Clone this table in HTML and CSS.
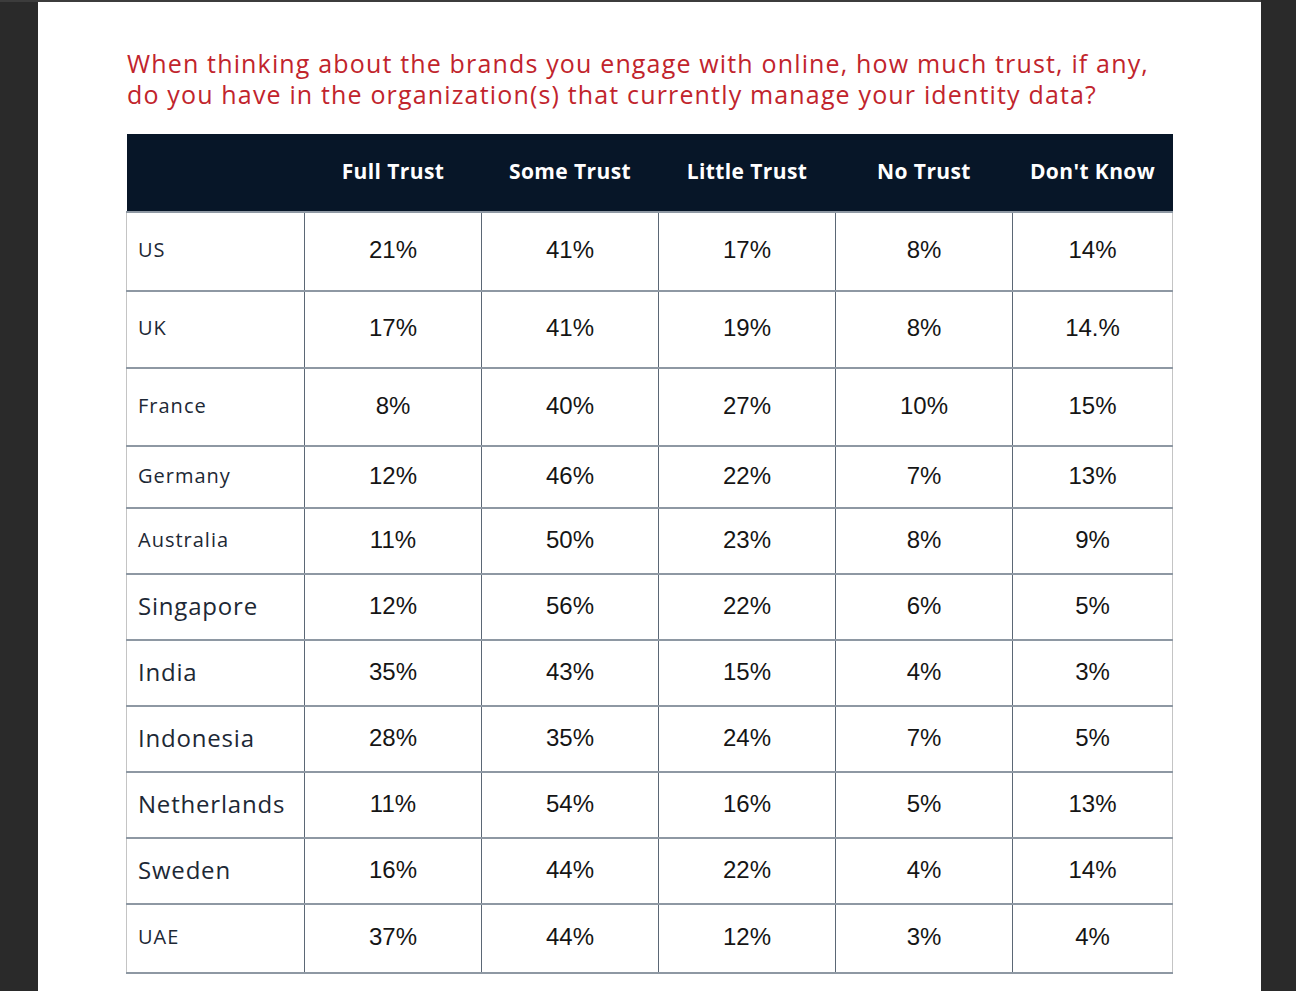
FILE: index.html
```html
<!DOCTYPE html>
<html lang="en">
<head>
<meta charset="utf-8">
<title>Trust in identity data</title>
<link rel="stylesheet" href="styles.css">
</head>
<body>
<div class="frame">
  <div class="page">
    <h1 class="question">When thinking about the brands you engage with online, how much trust, if any,<br>do you have in the organization(s) that currently manage your identity data?</h1>
    <table class="trust">
      <colgroup>
        <col class="c-country"><col class="c-val"><col class="c-val"><col class="c-val"><col class="c-val"><col class="c-last">
      </colgroup>
      <thead>
        <tr class="r-head">
          <th></th><th>Full Trust</th><th>Some Trust</th><th>Little Trust</th><th>No Trust</th><th>Don't Know</th>
        </tr>
      </thead>
      <tbody>
        <tr class="r-79"><td class="country sm">US</td><td>21%</td><td>41%</td><td>17%</td><td>8%</td><td>14%</td></tr>
        <tr class="r-77"><td class="country sm">UK</td><td>17%</td><td>41%</td><td>19%</td><td>8%</td><td>14.%</td></tr>
        <tr class="r-78"><td class="country sm">France</td><td>8%</td><td>40%</td><td>27%</td><td>10%</td><td>15%</td></tr>
        <tr class="r-62"><td class="country sm">Germany</td><td>12%</td><td>46%</td><td>22%</td><td>7%</td><td>13%</td></tr>
        <tr class="r-66"><td class="country sm">Australia</td><td>11%</td><td>50%</td><td>23%</td><td>8%</td><td>9%</td></tr>
        <tr class="r-66"><td class="country lg">Singapore</td><td>12%</td><td>56%</td><td>22%</td><td>6%</td><td>5%</td></tr>
        <tr class="r-66"><td class="country lg">India</td><td>35%</td><td>43%</td><td>15%</td><td>4%</td><td>3%</td></tr>
        <tr class="r-66"><td class="country lg">Indonesia</td><td>28%</td><td>35%</td><td>24%</td><td>7%</td><td>5%</td></tr>
        <tr class="r-66"><td class="country lg">Netherlands</td><td>11%</td><td>54%</td><td>16%</td><td>5%</td><td>13%</td></tr>
        <tr class="r-66"><td class="country lg">Sweden</td><td>16%</td><td>44%</td><td>22%</td><td>4%</td><td>14%</td></tr>
        <tr class="r-69"><td class="country sm">UAE</td><td>37%</td><td>44%</td><td>12%</td><td>3%</td><td>4%</td></tr>
      </tbody>
    </table>
  </div>
</div>
</body>
</html>
```
FILE: styles.css
```css
html, body {
  margin: 0;
  padding: 0;
  background: #2a2a2a;
}
.frame {
  border-top: 2px solid #3c3c3c;
  padding-left: 38px;
  width: 1223px;
  height: 989px;
}
.page {
  background: #ffffff;
  height: 989px;
  padding-left: 88px;
  padding-top: 46px;
  box-sizing: border-box;
  overflow: hidden;
}
.question {
  margin: 0 0 24px 1px;
  font-family: "Open Sans", "Liberation Sans", sans-serif;
  font-weight: 400;
  font-size: 25px;
  line-height: 31px;
  color: #c1242c;
  letter-spacing: 1.16px;
  white-space: nowrap;
}
.trust {
  border-collapse: collapse;
  table-layout: fixed;
  width: 1046px;
}
.c-country { width: 178px; }
.c-val { width: 177px; }
.c-last { width: 160px; }
.trust th {
  background: #071628;
  color: #ffffff;
  font-family: "Open Sans", "Liberation Sans", sans-serif;
  font-weight: 700;
  font-size: 21px;
  letter-spacing: 0.4px;
  text-align: center;
  padding: 0 0 4px 0;
  border-bottom: 2px solid #8e98a3;
}
.r-head { height: 78px; }
.trust td {
  padding: 0 0 3px 0;
  text-align: center;
  vertical-align: middle;
  font-family: "Liberation Sans", Arial, sans-serif;
  font-size: 24px;
  color: #151515;
  border-top: 2px solid #8e98a3;
  border-bottom: 2px solid #8e98a3;
  border-left: 1px solid #5b6775;
  border-right: 1px solid #5b6775;
}
.trust td:first-child { border-left: 1px solid #c4c4c4; }
.trust td:last-child { border-right: 1px solid #c4c4c4; }
.trust td.country {
  text-align: left;
  padding-left: 11px;
  font-family: "Open Sans", "Liberation Sans", sans-serif;
  color: #1d2835;
}
.country.sm { font-size: 20px; letter-spacing: 1px; padding-bottom: 4px; }
.country.lg { font-size: 24px; letter-spacing: 0.8px; padding-bottom: 3px; }
.r-79 { height: 79px; }
.r-77 { height: 77px; }
.r-78 { height: 78px; }
.r-62 { height: 62px; }
.r-66 { height: 66px; }
.r-69 { height: 69px; }
```
